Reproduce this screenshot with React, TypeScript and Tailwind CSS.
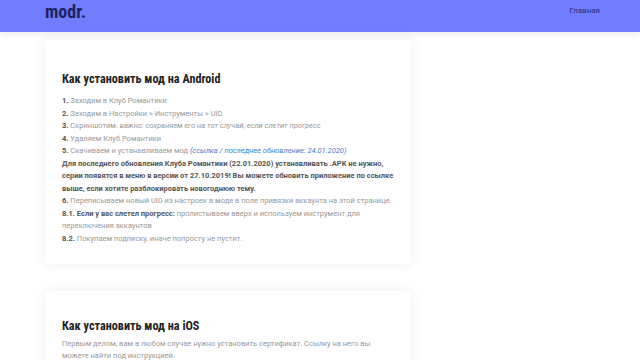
import React from "react";

const head = { fontFamily: '"Roboto Condensed", "Liberation Sans Narrow", "DejaVu Sans Condensed", Roboto, sans-serif' };

export default function App() {
  return (
    <div className="min-h-[360px] w-[640px] overflow-hidden bg-white" style={{ fontFamily: 'Roboto, "Liberation Sans", sans-serif' }}>
      <header className="flex h-[32px] items-center justify-between bg-[#717dff] pl-[45px] pr-[40px] shadow-[0_2px_6px_rgba(0,0,0,0.08)]">
        <div className="text-[18px] font-bold leading-none text-[#1d2260] -mt-[8px]" style={head}>modr.</div>
        <div className="-mt-[10px] text-[8px] text-[#232a80]">Главная</div>
      </header>
      <main className="flex flex-col gap-[27px] pl-[45px] pt-[8px]">
        <section className="w-[366px] bg-white px-[17px] pt-[30px] pb-[18px] shadow-[0_0_12px_rgba(0,0,0,0.07)]">
          <h2 className="mb-[7px] text-[12.2px] font-bold leading-[18px] text-[#222]" style={head}>Как установить мод на Android</h2>
          <div className="text-[7.5px] leading-[12.55px] text-[#999]">
            <p><b className="text-[#555]">1.</b> Заходим в Клуб Романтики</p>
            <p><b className="text-[#555]">2.</b> Заходим в Настройки &gt; Инструменты &gt; UID</p>
            <p><b className="text-[#555]">3.</b> Скриншотим. <i>важно: сохраняем его на тот случай, если слетит прогресс</i></p>
            <p><b className="text-[#555]">4.</b> Удаляем Клуб Романтики</p>
            <p><b className="text-[#555]">5.</b> Скачиваем и устанавливаем мод <i className="text-[#3d7fd0]">(ссылка / последнее обновление: 24.01.2020)</i></p>
            <p className="font-bold text-[#555]">Для последнего обновления Клуба Романтики (22.01.2020) устанавливать .APK не нужно, серии появятся в меню в версии от 27.10.2019! Вы можете обновить приложение по ссылке выше, если хотите разблокировать новогоднюю тему.</p>
            <p><b className="text-[#555]">6.</b> Переписываем новый UID из настроек в моде в поле привязки аккаунта на этой странице.</p>
            <p><b className="text-[#555]">8.1. Если у вас слетел прогресс:</b> пролистываем вверх и используем инструмент для переключения аккаунтов</p>
            <p><b className="text-[#555]">8.2.</b> Покупаем подписку, иначе попросту не пустит.</p>
          </div>
        </section>
        <section className="w-[366px] bg-white px-[17px] pt-[26px] pb-[16px] shadow-[0_0_12px_rgba(0,0,0,0.07)]">
          <h2 className="mb-[3px] text-[12.2px] font-bold leading-[18px] text-[#222]" style={head}>Как установить мод на iOS</h2>
          <p className="text-[7.5px] leading-[12.55px] text-[#999]">Первым делом, вам в любом случае нужно установить сертификат. Ссылку на него вы можете найти под инструкцией.</p>
        </section>
      </main>
    </div>
  );
}
